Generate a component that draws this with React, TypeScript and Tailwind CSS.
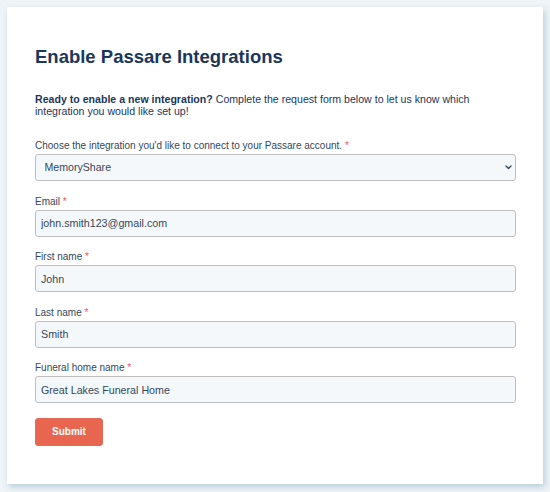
import React from "react";

const font = { fontFamily: '"Liberation Sans", Arial, Helvetica, sans-serif' };

function Label({ children }: { children: React.ReactNode }) {
  return (
    <label className="block text-[10px] leading-[12px] text-[#33475b] mb-[2px]">
      {children}
      <span className="text-[#f2545b]"> *</span>
    </label>
  );
}

function Field({ label, value }: { label: string; value: string }) {
  return (
    <div className="mb-[14.5px]">
      <Label>{label}</Label>
      <input
        readOnly
        value={value}
        className="block w-[481px] h-[27px] px-[5px] rounded-[3px] border border-[#bfbfbf] bg-[#f5f8fa] text-[10.7px] text-[#33475b] outline-none"
        style={font}
      />
    </div>
  );
}

export default function App() {
  return (
    <div className="w-[550px] h-[492px] bg-[#eef4f7] pt-[7px] pl-[7px]" style={font}>
      <div className="w-[536px] h-[477px] bg-white shadow-[2px_3px_6px_rgba(90,140,170,0.35)] pl-[28px] pt-[39px]">
        <h1 className="text-[18.5px] leading-[22px] font-bold text-[#1b365d] m-0">
          Enable Passare Integrations
        </h1>
        <p className="mt-[25px] text-[10.6px] leading-[12px] text-[#1b365d] w-[450px]">
          <span className="font-bold">Ready to enable a new integration?</span> Complete the request form below to let us know which integration you would like set up!
        </p>
        <div className="mt-[23px]">
          <div className="mb-[14.5px]">
            <Label>Choose the integration you'd like to connect to your Passare account.</Label>
            <div className="relative w-[481px] h-[27px]">
              <div className="w-full h-full rounded-[3px] border border-[#bfbfbf] bg-[#f5f8fa] text-[10.6px] leading-[25px] text-[#33475b] px-[8.5px]">
                MemoryShare
              </div>
              <svg
                className="absolute right-[4px] top-[11px]"
                width="7"
                height="5"
                viewBox="0 0 7 5"
                fill="none"
              >
                <path d="M1 1 L3.5 3.5 L6 1" stroke="#33475b" strokeWidth="1.3" strokeLinecap="round" strokeLinejoin="round" />
              </svg>
            </div>
          </div>
          <Field label="Email" value="john.smith123@gmail.com" />
          <Field label="First name" value="John" />
          <Field label="Last name" value="Smith" />
          <Field label="Funeral home name" value="Great Lakes Funeral Home" />
        </div>
        <button className="block w-[68px] h-[28px] rounded-[3px] bg-[#e8654f] border border-[#e26a56] text-white text-[10px] font-bold">
          Submit
        </button>
      </div>
    </div>
  );
}
